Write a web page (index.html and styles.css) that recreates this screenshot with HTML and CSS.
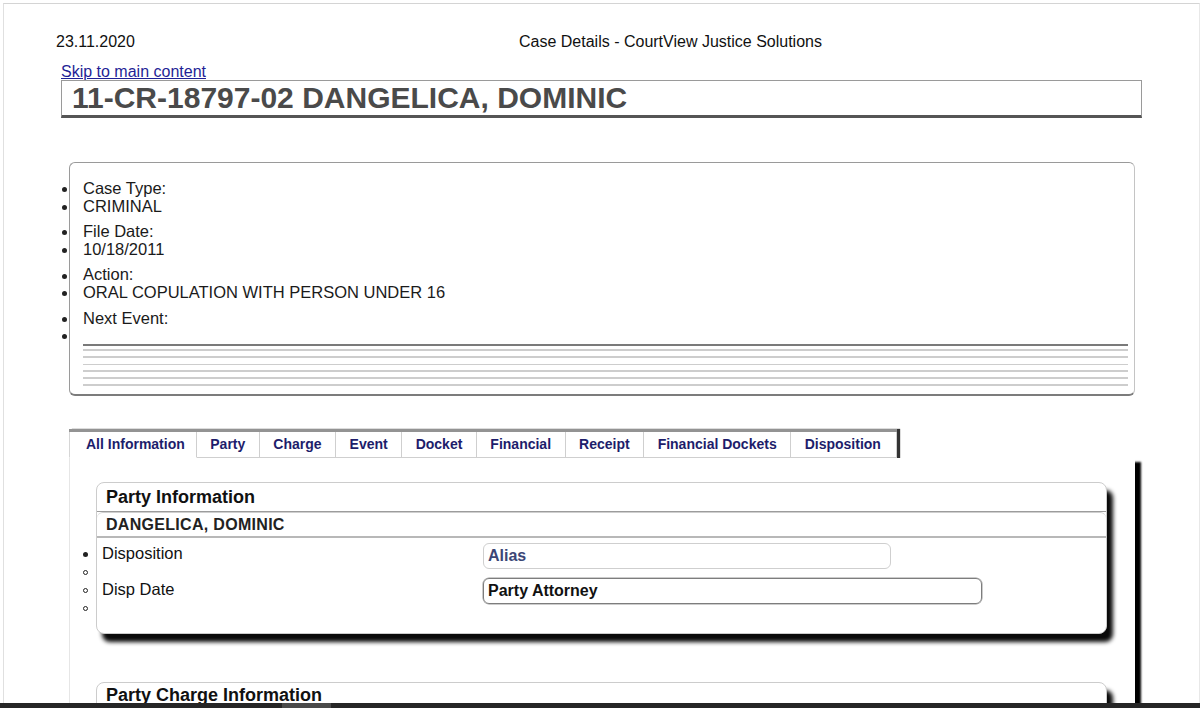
FILE: index.html
```html
<!DOCTYPE html>
<html lang="en">
<head>
  <meta charset="UTF-8" />
  <title>Case Details - CourtView Justice Solutions</title>
  <link rel="stylesheet" href="styles.css">
</head>
<body>

  <div class="sheet">

    <!-- Print header -->
    <div class="print-head">
      <span class="print-date">23.11.2020</span>
      <span class="print-title">Case Details - CourtView Justice Solutions</span>
    </div>

    <div class="main">
      <a href="#content" class="skip">Skip to main content</a>
      <h1 class="case-title">11-CR-18797-02 DANGELICA, DOMINIC</h1>

      <!-- Case summary -->
      <div class="summary">
        <ul class="summary-list">
          <li>Case Type:</li>
          <li>CRIMINAL</li>
          <li class="pair">File Date:</li>
          <li>10/18/2011</li>
          <li class="pair">Action:</li>
          <li>ORAL COPULATION WITH PERSON UNDER 16</li>
          <li class="pair">Next Event:</li>
          <li></li>
        </ul>
        <div class="rules">
          <div class="rule"></div>
          <div class="rule"></div>
          <div class="rule thin"></div>
          <div class="rule"></div>
          <div class="rule"></div>
          <div class="rule"></div>
        </div>
      </div>

      <!-- Tabs -->
      <div class="tabs">
        <a href="#" class="tab active">All Information</a>
        <a href="#" class="tab">Party</a>
        <a href="#" class="tab">Charge</a>
        <a href="#" class="tab">Event</a>
        <a href="#" class="tab">Docket</a>
        <a href="#" class="tab">Financial</a>
        <a href="#" class="tab">Receipt</a>
        <a href="#" class="tab">Financial Dockets</a>
        <a href="#" class="tab last">Disposition</a>
      </div>

      <div class="panel" id="content">
        <div class="section">
          <div class="section-head">Party Information</div>
          <div class="name-bar">DANGELICA, DOMINIC</div>
          <div class="party-body">
            <ul class="party-list">
              <li class="disc">Disposition</li>
              <li class="circle"></li>
              <li class="circle">Disp Date</li>
              <li class="circle"></li>
            </ul>
            <div class="party-links">
              <div class="sub-box alias">Alias</div>
              <div class="sub-box attorney">Party Attorney</div>
            </div>
          </div>
        </div>

        <div class="section">
          <div class="section-head charge-head">Party Charge Information</div>
          <div class="name-bar">&nbsp;</div>
        </div>
      </div>
    </div>
  </div>

  <div class="bottom-bar"><span class="bar-thumb"></span></div>

</body>
</html>
```

FILE: styles.css
```css
body {
  margin: 0;
  font-family: "Liberation Sans", Arial, sans-serif;
  background-color: #fff;
  color: #1a1a1a;
  overflow: hidden;
}

.sheet {
  box-sizing: border-box;
  height: 700px;
  margin: 3px 0 0 3px;
  border-top: 1px solid #d4d4d4;
  border-left: 1px solid #e0e0e0;
  border-right: 1px solid #e8e8e8;
  overflow: hidden;
}

.print-head {
  display: flex;
  padding: 29px 0 0 52px;
  font-size: 16px;
  line-height: 18px;
  color: #111;
}

.print-date {
  width: 463px;
}

.main {
  padding-left: 57px;
}

.skip {
  display: block;
  width: max-content;
  margin-top: 13px;
  font-size: 16px;
  line-height: 16px;
  color: #1f1f96;
  text-decoration: underline;
}

.case-title {
  margin: 0;
  width: 1081px;
  box-sizing: border-box;
  padding: 0 10px;
  border: 1px solid #9a9a9a;
  border-bottom: 3px solid #555;
  font-size: 30px;
  line-height: 34px;
  font-weight: bold;
  color: #4a4a4a;
}

/* case summary box */
.summary {
  margin: 44px 0 0 8px;
  width: 1066px;
  box-sizing: border-box;
  padding: 17px 6px 8px 13px;
  border: 1px solid #9a9a9a;
  border-right-color: #c4c4c4;
  border-bottom: 2px solid #7c7c7c;
  border-radius: 6px;
}

.summary-list {
  list-style: none;
  margin: 0;
  padding: 0;
  font-size: 16.5px;
  line-height: 17.6px;
}

.summary-list li.pair {
  margin-top: 8px;
}

.summary-list li::before,
.party-list li::before {
  content: "";
  display: inline-block;
  box-sizing: border-box;
  width: 5px;
  height: 5px;
  border-radius: 50%;
  background-color: #222;
  vertical-align: middle;
}

.summary-list li::before {
  margin-left: -21px;
  margin-right: 16px;
}

.rules {
  border-top: 2px solid #7a7a7a;
  margin-top: -1px;
}

.rule {
  height: 2px;
  background-color: #cdcdcd;
  margin-top: 5px;
}

.rule:first-child {
  margin-top: 3px;
}

.rule.thin {
  height: 1px;
  margin-top: 6px;
  margin-bottom: 1px;
}

/* tabs */
.tabs {
  display: flex;
  width: max-content;
  margin: 33px 0 0 8px;
  border-top: 3px solid #939393;
  box-shadow: 3px 0 1px #333;
}

.tab {
  padding: 0 13.5px;
  font-size: 14px;
  line-height: 25px;
  font-weight: bold;
  color: #1d1d6b;
  text-decoration: none;
  border-right: 1px solid #cfcfcf;
  border-bottom: 1px solid #cfcfcf;
  background-color: #fff;
}

.tab.active {
  padding: 0 11px 0 16px;
  border-left: 1px solid #d6d6d6;
  border-bottom-color: #fff;
}

.tab.last {
  padding-right: 15px;
}

/* content panel */
.panel {
  margin-left: 8px;
  width: 1066px;
  height: 400px;
  box-sizing: border-box;
  padding-top: 24px;
  border-left: 1px solid #e6e6e6;
  background-color: #fff;
  box-shadow: 6px 4px 2px #000;
}

.section {
  margin-left: 26px;
  margin-bottom: 48px;
  width: 1011px;
  box-sizing: border-box;
  border: 1px solid #cccccc;
  border-radius: 8px;
  background-color: #fff;
  box-shadow: 6px 8px 4px #0a0a0a;
}

.section-head {
  padding-left: 9px;
  font-size: 18px;
  line-height: 28px;
  font-weight: bold;
  color: #111;
  border-bottom: 1px solid #9c9c9c;
}

.charge-head {
  line-height: 25px;
}

.name-bar {
  padding: 1px 0 0 9px;
  font-size: 16px;
  line-height: 22px;
  font-weight: bold;
  letter-spacing: 0.3px;
  color: #222;
  border-top: 1px solid #cfcfcf;
  border-bottom: 2px solid #b8b8b8;
  border-radius: 6px 6px 0 0;
}

.party-body {
  display: flex;
  padding: 5px 0 17px 0;
}

.party-list {
  list-style: none;
  margin: 1px 0 0 0;
  padding: 0 0 0 5px;
  width: 381px;
  font-size: 16.5px;
  line-height: 18px;
  color: #111;
}

.party-list li::before {
  margin-left: -19px;
  margin-right: 14px;
}

.party-list li.circle::before {
  background-color: #fff;
  border: 1px solid #222;
}

.party-links {
  display: flex;
  flex-direction: column;
  gap: 9px;
}

.sub-box {
  box-sizing: border-box;
  height: 26px;
  padding-left: 4px;
  font-size: 16px;
  line-height: 24px;
  font-weight: bold;
  border-radius: 6px;
}

.alias {
  width: 408px;
  color: #3b4676;
  border: 1px solid #cfcfcf;
}

.attorney {
  width: 499px;
  color: #111;
  border: 1px solid #7d7d7d;
  box-shadow: 0 0 0 0.5px #999;
}

.bottom-bar {
  height: 5px;
  background-color: #262626;
}

.bar-thumb {
  display: block;
  margin-left: 282px;
  width: 49px;
  height: 5px;
  background-color: #4a4a4a;
}
```
